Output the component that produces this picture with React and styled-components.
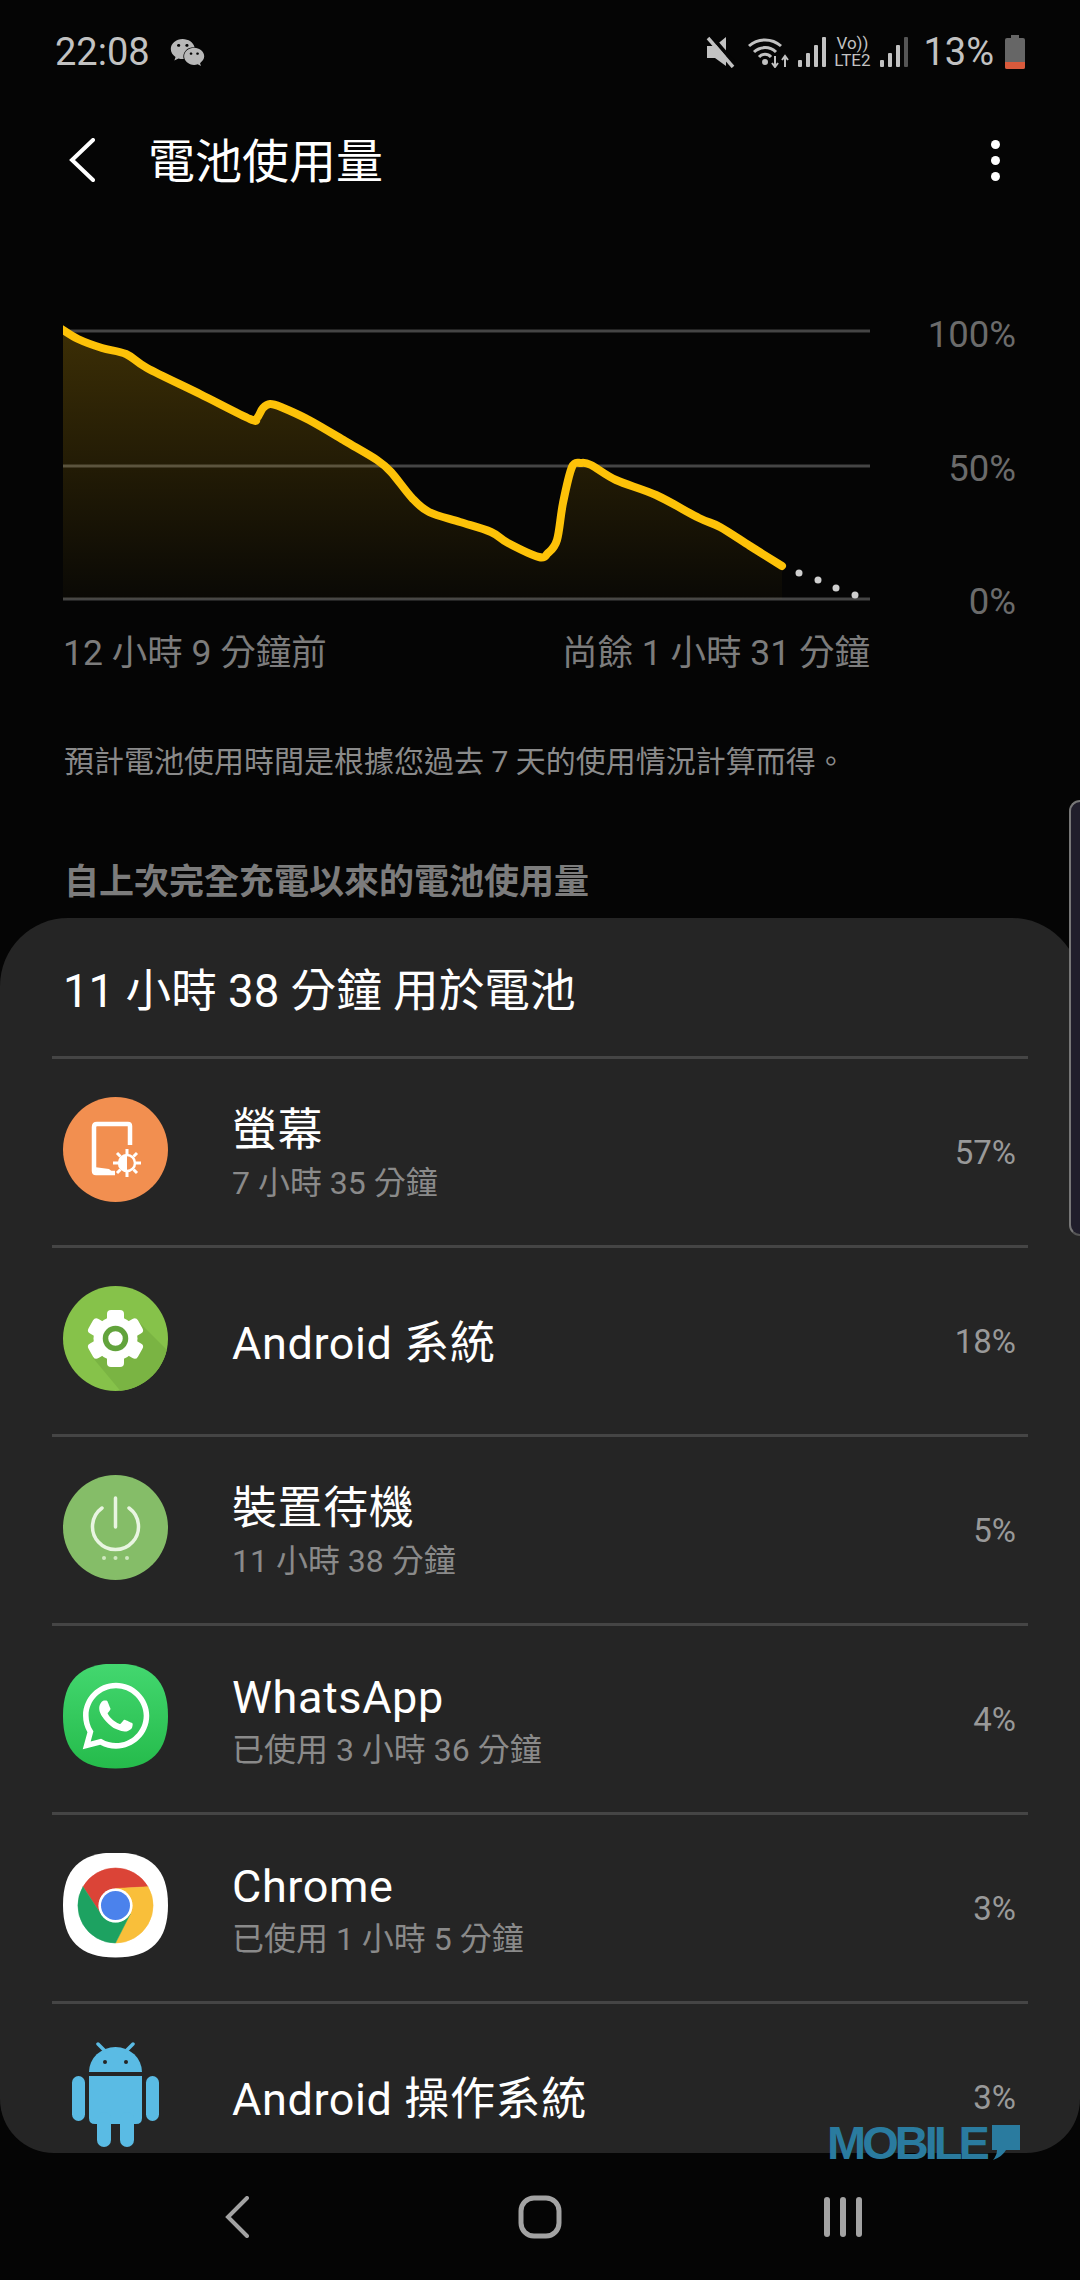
import React from "react";
import styled, { createGlobalStyle } from "styled-components";
import { FaWeixin, FaWhatsapp } from "react-icons/fa";

const FONT = `Roboto, "Noto Sans CJK TC", "Noto Sans CJK JP", sans-serif`;
const SQUIRCLE = "M52.5 0C88 0 105 17 105 52.5C105 88 88 105 52.5 105C17 105 0 88 0 52.5C0 17 17 0 52.5 0Z";

const linePoints = [
  [60, 328], [78, 339], [102, 348], [126, 354], [147, 368], [200, 394], [250, 419], [257, 418],
  [263, 408], [270, 404], [281, 407], [309, 420], [345, 441], [377, 460], [391, 472], [412, 498],
  [429, 512], [460, 522], [491, 532], [508, 543], [539, 557], [548, 553], [557, 540], [563, 503],
  [572, 467], [581, 463], [591, 465], [616, 480], [656, 495], [699, 518], [720, 527], [750, 546], [782, 566],
];
const dots = [[799, 573], [818, 580], [836, 588], [855, 595]];

// catmull-rom through the points, so the curve stays smooth
const smoothPath = pts => {
  let d = `M${pts[0][0]} ${pts[0][1]}`;
  for (let i = 0; i < pts.length - 1; i++) {
    const p0 = pts[i - 1] || pts[i];
    const p1 = pts[i];
    const p2 = pts[i + 1];
    const p3 = pts[i + 2] || p2;
    const c1x = p1[0] + (p2[0] - p0[0]) / 6;
    const c1y = p1[1] + (p2[1] - p0[1]) / 6;
    const c2x = p2[0] - (p3[0] - p1[0]) / 6;
    const c2y = p2[1] - (p3[1] - p1[1]) / 6;
    d += ` C${c1x.toFixed(1)} ${c1y.toFixed(1)} ${c2x.toFixed(1)} ${c2y.toFixed(1)} ${p2[0]} ${p2[1]}`;
  }
  return d;
};

const GlobalStyle = createGlobalStyle`
  html, body { margin: 0; padding: 0; background: #050505; }
  * { box-sizing: border-box; }
`;

const Page = styled.div`
  position: relative;
  width: 1080px;
  height: 2280px;
  overflow: hidden;
  background: #050505;
  font-family: ${FONT};
  color: #fff;
`;

const StatusBar = styled.div`
  display: flex;
  align-items: center;
  justify-content: space-between;
  height: 104px;
  padding: 0 54px 0 55px;
  color: #c2c2c2;
  font-size: 38px;
`;
const StatusLeft = styled.div`
  display: flex;
  align-items: center;
  gap: 20px;
`;
const StatusRight = styled.div`
  display: flex;
  align-items: center;
`;
const StatusIcon = styled.svg`
  display: block;
  flex: none;
  margin-left: ${p => p.$gap || 0}px;
`;
const Volte = styled.div`
  display: flex;
  flex-direction: column;
  align-items: center;
  width: 40px;
  margin-left: 6px;
  font-size: 17px;
  line-height: 17px;
`;
const Level = styled.span`
  margin-left: 15px;
`;

const Toolbar = styled.div`
  display: flex;
  align-items: center;
  height: 112px;
  padding: 0 0 0 69px;
`;
const Title = styled.div`
  flex: 1;
  margin-left: 53px;
  padding-bottom: 5px;
  font-size: 47px;
`;
const MoreDots = styled.div`
  display: flex;
  flex-direction: column;
  gap: 7px;
  margin-right: 80px;
  i {
    display: block;
    width: 9px;
    height: 9px;
    border-radius: 50%;
    background: #fff;
  }
`;

const ChartRow = styled.div`
  display: flex;
  margin-top: 104px;
  padding-left: 63px;
`;
const ChartSvg = styled.svg`
  display: block;
  flex: none;
`;
const Scale = styled.div`
  display: flex;
  flex-direction: column;
  justify-content: space-between;
  align-items: flex-end;
  width: 146px;
  height: 295px;
  padding-top: 2px;
  color: #6b6b6b;
  font-size: 36.5px;
  line-height: 26px;
`;
const AxisRow = styled.div`
  display: flex;
  justify-content: space-between;
  width: 807px;
  margin: 18px 0 0 63px;
  color: #7c7c7c;
  font-size: 35.5px;
  line-height: 40px;
`;
const Note = styled.div`
  margin: 69px 0 0 64px;
  color: #8a8a8a;
  font-size: 30px;
  line-height: 40px;
`;
const SectionHead = styled.div`
  margin: 81px 0 0 64px;
  color: #7c7c7c;
  font-size: 35px;
  font-weight: 700;
  line-height: 40px;
`;

const Panel = styled.div`
  display: flex;
  flex-direction: column;
  height: 1235px;
  margin-top: 15px;
  overflow: hidden;
  background: #252525;
  border-radius: 68px 68px 54px 54px;
`;
const PanelHead = styled.div`
  flex: none;
  display: flex;
  align-items: center;
  height: 138px;
  padding-left: 63px;
  font-size: 45.6px;
`;
const Row = styled.div`
  flex: none;
  display: flex;
  align-items: center;
  height: 189px;
  margin: 0 52px;
  padding: 0 12px 0 11px;
  border-top: 3px solid #454545;
`;
const IconSlot = styled.div`
  flex: none;
  display: flex;
  align-items: center;
  justify-content: center;
  width: 105px;
  height: 105px;
  margin: 0 64px 6px 0;
  background: ${p => p.$bg || "transparent"};
  clip-path: ${p => (p.$squircle ? `path("${SQUIRCLE}")` : "none")};
`;
const RowText = styled.div`
  flex: 1;
  padding: 5px 0 ${p => (p.$single ? 0 : 2)}px;
`;
const RowName = styled.div`
  font-size: 45px;
  letter-spacing: 0.6px;
  line-height: 54px;
`;
const RowSub = styled.div`
  margin-top: 5px;
  color: #8a8a8a;
  font-size: 32px;
  line-height: 40px;
`;
const Percent = styled.div`
  color: #999;
  font-size: 33px;
`;

const NavBar = styled.div`
  display: grid;
  grid-template-columns: repeat(3, 303px);
  justify-items: center;
  align-items: center;
  height: 127px;
  padding: 0 85.5px;
`;
const RecentBars = styled.div`
  display: flex;
  gap: 10px;
  i {
    display: block;
    width: 6px;
    height: 40px;
    border-radius: 3px;
    background: #a3a3a3;
  }
`;

const EdgeHandle = styled.div`
  position: absolute;
  top: 800px;
  right: 0;
  width: 11px;
  height: 436px;
  background: #201e2b;
  border-left: 2px solid #777;
  border-top: 2px solid #777;
  border-bottom: 2px solid #555;
  border-radius: 14px 0 0 14px;
`;
const Watermark = styled.div`
  position: absolute;
  top: 2122px;
  left: 827px;
  display: flex;
  align-items: flex-start;
  color: #2a7b9f;
  font-family: "Liberation Sans", sans-serif;
  font-size: 47px;
  font-weight: 700;
  line-height: 42px;
  letter-spacing: -4px;
  svg {
    display: block;
    margin: 3px 0 0 6px;
  }
`;

const SignalIcon = ({ last = "#c2c2c2", gap }) => (
  <StatusIcon $gap={gap} width="28" height="30" viewBox="0 0 28 30" fill="#c2c2c2">
    <rect x="0" y="23" width="4" height="7" rx="1" />
    <rect x="8" y="16" width="4" height="14" rx="1" />
    <rect x="16" y="8" width="4" height="22" rx="1" />
    <rect x="24" y="0" width="4" height="30" rx="1" fill={last} />
  </StatusIcon>
);

const ScreenIcon = () => (
  <svg width="105" height="105" viewBox="0 0 105 105">
    <circle cx="52.5" cy="52.5" r="52.5" fill="#f28f50" />
    <path d="M52 76H33q-2 0-2-2V30q0-3 3-3h31q2 0 2 2v19" fill="none" stroke="#fff" strokeWidth="4.5" />
    <path d="M31 70l4 7h17l-6-5z" fill="#fff" />
    <circle cx="64" cy="66" r="13" fill="#f28f50" />
    <circle cx="64" cy="66" r="8" fill="none" stroke="#fff" strokeWidth="2.5" />
    <path d="M64 58a8 8 0 0 0 0 16z" fill="#fff" />
    <path
      d="M64 52v5M64 75v5M50 66h5M73 66h5M54 56l3.500 3.500M70.500 72.500l3.500 3.500M54 76l3.500-3.500M70.500 59.500l3.500-3.500"
      stroke="#fff"
      strokeWidth="3"
    />
  </svg>
);

const GearIcon = () => (
  <svg width="105" height="105" viewBox="0 0 105 105">
    <defs>
      <clipPath id="gearDisc">
        <circle cx="52.5" cy="52.5" r="52.5" />
      </clipPath>
    </defs>
    <circle cx="52.5" cy="52.5" r="52.5" fill="#86c24a" />
    <path d="M72 32L120 80 70 120 30 72z" fill="#7ab443" clipPath="url(#gearDisc)" />
    <circle cx="52.5" cy="52.5" r="22" fill="#fff" />
    {[0, 60, 120, 180, 240, 300].map(a => (
      <rect key={a} x="44" y="24" width="17" height="14" rx="4" fill="#fff" transform={`rotate(${a} 52.5 52.5)`} />
    ))}
    <circle cx="52.5" cy="52.5" r="10" fill="#fff" stroke="#62a33c" strokeWidth="5.500" />
  </svg>
);

const PowerIcon = () => (
  <svg width="105" height="105" viewBox="0 0 105 105">
    <circle cx="52.5" cy="52.5" r="52.5" fill="#85bd68" />
    <path d="M39 33a23 23 0 1 0 27 0" fill="none" stroke="#e9f5e1" strokeWidth="3.500" strokeLinecap="round" />
    <path d="M52.500 23v29" stroke="#e9f5e1" strokeWidth="3.500" strokeLinecap="round" />
    <circle cx="41" cy="83" r="2" fill="#cfe8bf" />
    <circle cx="52.500" cy="83" r="2" fill="#cfe8bf" />
    <circle cx="64" cy="83" r="2" fill="#cfe8bf" />
  </svg>
);

const ChromeIcon = () => (
  <svg width="105" height="105" viewBox="-52.500 -52.500 105 105">
    {[["#db4437", 0], ["#f9bf3a", 120], ["#1da261", 240]].map(([fill, angle]) => (
      <path
        key={fill}
        d="M-32.500-18.800A37.500 37.500 0 0 1 32.500-18.800L0-17A17 17 0 0 0-14.700 8.500Z"
        fill={fill}
        stroke={fill}
        strokeWidth="0.5"
        transform={`rotate(${angle})`}
      />
    ))}
    <circle r="17" fill="#fff" />
    <circle r="14.500" fill="#4b82ec" />
  </svg>
);

const AndroidIcon = () => (
  <svg width="105" height="105" viewBox="0 0 105 105" fill="#5abbe4">
    <path d="M26 30a26.500 25 0 0 1 53 0z" />
    <path d="M42 9L35 2M63 9l7-7" stroke="#5abbe4" strokeWidth="3.500" strokeLinecap="round" />
    <circle cx="42" cy="20" r="2" fill="#252525" />
    <circle cx="63" cy="20" r="2" fill="#252525" />
    <path d="M26 34h53v42q0 6-6 6H32q-6 0-6-6z" />
    <rect x="9" y="34" width="13" height="45" rx="6.500" />
    <rect x="83" y="34" width="13" height="45" rx="6.500" />
    <rect x="34" y="70" width="14" height="35" rx="7" />
    <rect x="57" y="70" width="14" height="35" rx="7" />
  </svg>
);

const rows = [
  { name: "螢幕", sub: "7 小時 35 分鐘", pct: "57%", icon: <IconSlot><ScreenIcon /></IconSlot> },
  { name: "Android 系統", pct: "18%", icon: <IconSlot><GearIcon /></IconSlot> },
  { name: "裝置待機", sub: "11 小時 38 分鐘", pct: "5%", icon: <IconSlot><PowerIcon /></IconSlot> },
  {
    name: "WhatsApp",
    sub: "已使用 3 小時 36 分鐘",
    pct: "4%",
    icon: (
      <IconSlot $squircle $bg="linear-gradient(#43d76f, #25bb4b)">
        <FaWhatsapp size={76} color="#fff" />
      </IconSlot>
    ),
  },
  {
    name: "Chrome",
    sub: "已使用 1 小時 5 分鐘",
    pct: "3%",
    icon: <IconSlot $squircle $bg="#fff"><ChromeIcon /></IconSlot>,
  },
  { name: "Android 操作系統", pct: "3%", icon: <IconSlot><AndroidIcon /></IconSlot> },
];

export default function App() {
  const line = smoothPath(linePoints);
  return (
    <Page>
      <GlobalStyle />
      <StatusBar>
        <StatusLeft>
          <span>22:08</span>
          <FaWeixin size={35} color="#b8b8b8" />
        </StatusLeft>
        <StatusRight>
          <StatusIcon width="29" height="32" viewBox="0 0 29 32" fill="#c2c2c2">
            <path d="M1 10h8L20 1v29L9 22H1z" />
            <path d="M5 0l24 28" stroke="#050505" strokeWidth="4" />
            <path d="M2 2l25 29" stroke="#c2c2c2" strokeWidth="3.500" />
          </StatusIcon>
          <StatusIcon $gap={13} width="41" height="32" viewBox="0 0 41 32" fill="none" stroke="#c2c2c2" strokeWidth="3">
            <path d="M1 10A24 24 0 0 1 33 10" />
            <path d="M6 16A16 16 0 0 1 28 16" />
            <path d="M11 21A8 8 0 0 1 23 21" />
            <circle cx="17" cy="26" r="1.500" fill="#c2c2c2" />
            <path d="M27 20v11M24 27l3 4 3-4M37 31V20M34 24l3-4 3 4" strokeWidth="2" />
          </StatusIcon>
          <SignalIcon gap={9} />
          <Volte>
            <span>Vo))</span>
            <span>LTE2</span>
          </Volte>
          <SignalIcon gap={8} last="#555" />
          <Level>13%</Level>
          <StatusIcon $gap={10} width="22" height="34" viewBox="0 0 22 34">
            <rect x="7" y="0" width="8" height="4" fill="#666" />
            <rect x="1" y="3" width="20" height="31" rx="2" fill="#666" />
            <path d="M1 27h20v5q0 2-2 2H3q-2 0-2-2z" fill="#d95a3c" />
          </StatusIcon>
        </StatusRight>
      </StatusBar>

      <Toolbar>
        <svg width="26" height="44" viewBox="0 0 26 44" fill="none" stroke="#fff" strokeWidth="4" strokeLinecap="round">
          <path d="M24 2L3 22l21 20" />
        </svg>
        <Title>電池使用量</Title>
        <MoreDots>
          <i />
          <i />
          <i />
        </MoreDots>
      </Toolbar>

      <ChartRow>
        <ChartSvg width="807" height="293" viewBox="63 320 807 293">
          <defs>
            <linearGradient id="chartFill" gradientUnits="userSpaceOnUse" x1="0" y1="330" x2="0" y2="599">
              <stop offset="0" stopColor="#ffc107" stopOpacity="0.22" />
              <stop offset="1" stopColor="#ffc107" stopOpacity="0.02" />
            </linearGradient>
          </defs>
          {[331, 466, 599].map(y => (
            <line key={y} x1="63" x2="870" y1={y} y2={y} stroke="#454545" strokeWidth="3" />
          ))}
          <path d={`${line} L782 599 L60 599Z`} fill="url(#chartFill)" />
          <path d={line} fill="none" stroke="#fdc208" strokeWidth="8" strokeLinecap="round" strokeLinejoin="round" />
          {dots.map(([x, y]) => (
            <circle key={x} cx={x} cy={y} r="3.500" fill="#cfcfcf" />
          ))}
        </ChartSvg>
        <Scale>
          <span>100%</span>
          <span>50%</span>
          <span>0%</span>
        </Scale>
      </ChartRow>
      <AxisRow>
        <span>12 小時 9 分鐘前</span>
        <span>尚餘 1 小時 31 分鐘</span>
      </AxisRow>
      <Note>預計電池使用時間是根據您過去 7 天的使用情況計算而得。</Note>
      <SectionHead>自上次完全充電以來的電池使用量</SectionHead>

      <Panel>
        <PanelHead>11 小時 38 分鐘 用於電池</PanelHead>
        {rows.map(r => (
          <Row key={r.name}>
            {r.icon}
            <RowText $single={!r.sub}>
              <RowName>{r.name}</RowName>
              {r.sub && <RowSub>{r.sub}</RowSub>}
            </RowText>
            <Percent>{r.pct}</Percent>
          </Row>
        ))}
      </Panel>

      <NavBar>
        <svg width="24" height="42" viewBox="0 0 24 42" fill="none" stroke="#a3a3a3" strokeWidth="4" strokeLinecap="round">
          <path d="M22 2L3 21l19 19" />
        </svg>
        <svg width="44" height="44" viewBox="0 0 44 44" fill="none" stroke="#a3a3a3" strokeWidth="5">
          <rect x="3" y="3" width="38" height="38" rx="13" />
        </svg>
        <RecentBars>
          <i />
          <i />
          <i />
        </RecentBars>
      </NavBar>

      <EdgeHandle />
      <Watermark>
        MOBILE
        <svg width="28" height="36" viewBox="0 0 28 36" fill="#2a7b9f">
          <path d="M0 0h28v25H14Q10 32 1 35q4-5 4-10H0z" />
        </svg>
      </Watermark>
    </Page>
  );
}
